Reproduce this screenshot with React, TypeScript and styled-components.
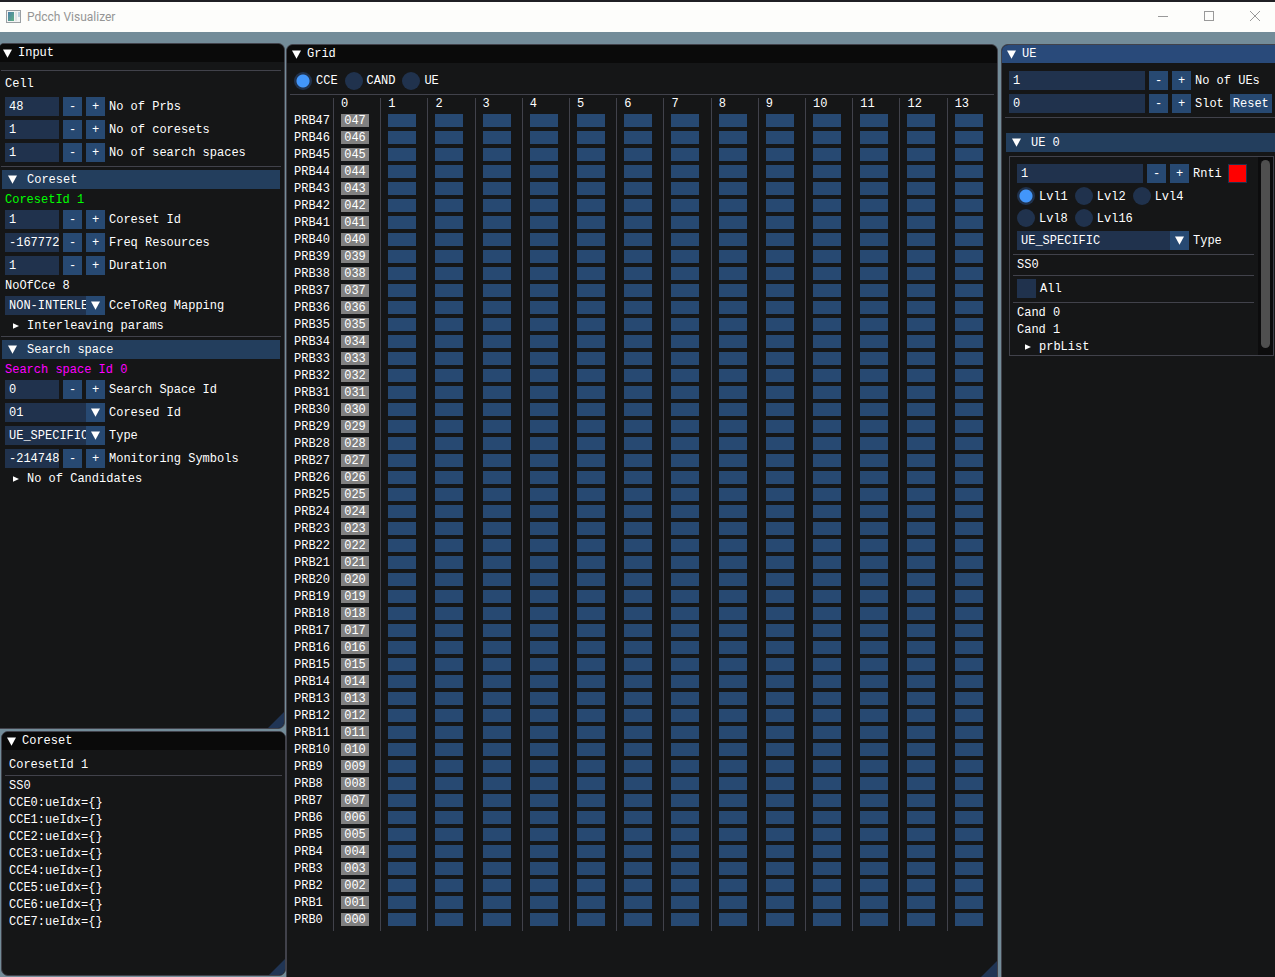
import React, { useState } from "react";
import styled, { createGlobalStyle, css } from "styled-components";

const color = {
  backdrop: "#738c99",
  window: "#151617",
  title: "#0a0a0a",
  titleActive: "#294a7a",
  frame: "#20324d",
  button: "#274972",
  header: "#233e5d",
  line: "#41424b",
  grip: "#203555",
  mark: "#4296fa",
  text: "#ffffff",
};

const GlobalStyle = createGlobalStyle`
  *, *::before, *::after { box-sizing: border-box; }
  body {
    margin: 0;
    background: ${color.backdrop};
    color: ${color.text};
    font: 12px/13px "Liberation Mono", monospace;
  }
  button, input, select { font: inherit; color: inherit; margin: 0; border: 0; border-radius: 0; }
`;

const Screen = styled.div`
  min-height: 100vh;
  display: flex;
  flex-direction: column;
  border-top: 2px solid #1f1f24;
`;

const AppBar = styled.header`
  height: 30px;
  flex: none;
  display: flex;
  align-items: center;
  gap: 6px;
  padding: 0 0 2px 6px;
  background: #fdfdfb;
  color: #959595;
  font: 12px/16px Roboto, "Noto Sans", sans-serif;
`;

const AppTitle = styled.h1`
  flex: 1;
  margin: 0;
  padding-top: 2px;
  font: inherit;
`;

const WindowButton = styled.button`
  width: 40px;
  height: 28px;
  padding: 0;
  display: grid;
  place-items: center;
  background: transparent;
`;

const Desktop = styled.main`
  flex: 1;
  display: flex;
  padding-top: 12px;
`;

const LeftColumn = styled.div`
  flex: 0 0 286px;
  display: flex;
  flex-direction: column;
  gap: 2px;
  margin-top: -1px;
  padding-bottom: 1px;
`;

type Edge = "left" | "right" | "none";

const Panel = styled.section<{ $cut?: Edge; $grow?: boolean }>`
  position: relative;
  display: flex;
  flex-direction: column;
  min-width: 0;
  overflow: hidden;
  background: ${color.window};
  border: 1px solid ${color.line};
  border-radius: 7px;
  ${(p) => p.$grow && css`flex: 1;`}
  ${(p) => p.$cut === "left" && css`border-left: 0; border-radius: 4px 7px 7px 0;`}
  ${(p) => p.$cut === "right" && css`border-right: 0; border-radius: 7px 0 0 0;`}
`;

const InputPanel = styled(Panel)`
  margin-right: 1px;
`;

const CoresetPanel = styled(Panel)`
  margin-left: 1px;
  flex: 0 0 245px;
`;

const GridPanel = styled(Panel)`
  border-bottom: 0;
  border-radius: 7px 7px 0 0;
`;

const UePanel = styled(Panel)`
  flex: 0 0 274px;
  margin-left: 3px;
  border-bottom: 0;
`;

const TitleBar = styled.h2<{ $active?: boolean; $inset?: number }>`
  height: 18px;
  flex: none;
  display: flex;
  align-items: center;
  gap: 6px;
  margin: 0;
  padding-left: ${(p) => p.$inset ?? 5}px;
  font: inherit;
  background: ${(p) => (p.$active ? color.titleActive : color.title)};
`;

const Body = styled.div<{ $left?: number; $right?: number }>`
  display: flex;
  flex-direction: column;
  gap: 4px;
  padding: 8px ${(p) => p.$right ?? 7}px 8px ${(p) => p.$left ?? 7}px;
`;

const Grip = styled.span`
  position: absolute;
  right: 0;
  bottom: 0;
  width: 16px;
  height: 16px;
  background: ${color.grip};
  clip-path: polygon(100% 0, 100% 100%, 0 100%);
`;

const Separator = styled.hr`
  width: auto;
  height: 1px;
  margin: 0 -4px -1px;
  border: 0;
  background: ${color.line};
`;

const Text = styled.p<{ $color?: string; $tall?: boolean }>`
  height: ${(p) => (p.$tall ? 19 : 13)}px;
  margin: 0;
  line-height: ${(p) => (p.$tall ? 21 : 15)}px;
  color: ${(p) => p.$color ?? color.text};
`;

const Caption = styled.span`
  padding-top: 2px;
`;

const FieldLabel = styled.label`
  padding-top: 2px;
`;

const SectionHeader = styled.button<{ $spaced?: boolean }>`
  height: 19px;
  display: flex;
  align-items: center;
  gap: 10px;
  margin: ${(p) => (p.$spaced ? 12 : 0)}px -3px 0;
  padding: 0 6px;
  background: ${color.header};
  text-align: left;
`;

const TreeItem = styled.button`
  height: 13px;
  display: flex;
  align-items: center;
  gap: 8px;
  padding: 0 8px;
  background: transparent;
  line-height: 13px;
`;

const Row = styled.div<{ $height?: number; $gap?: number }>`
  height: ${(p) => p.$height ?? 19}px;
  display: flex;
  align-items: center;
  gap: ${(p) => p.$gap ?? 4}px;
  white-space: nowrap;
`;

const NumberGroup = styled.div<{ $width: number }>`
  flex: none;
  width: ${(p) => p.$width}px;
  display: flex;
  gap: 4px;
`;

const NumberInput = styled.input`
  flex: 1;
  min-width: 0;
  height: 19px;
  padding: 0 0 0 4px;
  background: ${color.frame};
`;

const SquareButton = styled.button`
  flex: none;
  width: 19px;
  height: 19px;
  padding: 2px 0 0;
  background: ${color.button};
  text-align: center;
`;

const TextButton = styled.button`
  height: 19px;
  margin-left: 2px;
  padding: 2px 3px 0;
  background: ${color.button};
`;

const ColorSwatch = styled.button`
  width: 19px;
  height: 19px;
  margin-left: 2px;
  background: #ff0000;
  && { border: 1px solid ${color.frame}; }
`;

const ComboBox = styled.div<{ $width: number }>`
  position: relative;
  flex: none;
  width: ${(p) => p.$width}px;
  height: 19px;
`;

const Select = styled.select`
  appearance: none;
  width: 100%;
  height: 19px;
  padding: 2px 19px 0 4px;
  background: linear-gradient(${color.button}, ${color.button}) right / 19px 100% no-repeat ${color.frame};
`;

const ComboArrow = styled.span`
  position: absolute;
  top: 0;
  right: 0;
  width: 19px;
  height: 19px;
  display: grid;
  place-items: center;
  pointer-events: none;
`;

const ChoiceLabel = styled.label`
  display: flex;
  align-items: center;
  gap: 4px;
`;

const Radio = styled.input`
  appearance: none;
  width: 18px;
  height: 18px;
  && { border-radius: 50%; }
  background: ${color.frame};
  &:checked {
    background: radial-gradient(circle, ${color.mark} 0 6px, ${color.frame} 7px);
  }
`;

const Checkbox = styled.input`
  appearance: none;
  width: 19px;
  height: 19px;
  background: ${color.frame};
  &:checked { background: ${color.mark}; }
`;

const PrbTable = styled.table`
  width: calc(100% + 8px);
  margin: 0 -4px;
  table-layout: fixed;
  border-collapse: separate;
  border-spacing: 0;
`;

const NameCol = styled.col`
  width: 43px;
`;

const SymbolHead = styled.th`
  height: 14px;
  padding: 0 0 0 7px;
  border-left: 1px solid ${color.line};
  font-weight: normal;
  text-align: left;
  vertical-align: top;
`;

const PrbName = styled.th`
  padding: 3px 0 1px 4px;
  font-weight: normal;
  text-align: left;
  vertical-align: top;
`;

const PrbCell = styled.td`
  height: 17px;
  padding: 2px 0 2px 7px;
  border-left: 1px solid ${color.line};
  vertical-align: top;
  tr:last-child > & { height: 20px; }
`;

const ResourceBlock = styled.button<{ $used?: boolean }>`
  display: block;
  width: 28px;
  height: 13px;
  padding: 1px 0 0;
  line-height: 13px;
  text-align: center;
  background: ${(p) => (p.$used ? "#808080" : color.button)};
`;

const Child = styled.div`
  display: flex;
  border: 1px solid ${color.line};
`;

const ChildBody = styled.div`
  flex: 1;
  min-width: 0;
  display: flex;
  flex-direction: column;
  gap: 4px;
  padding: 7px 8px 2px 7px;
`;

const ScrollTrack = styled.div`
  flex: 0 0 15px;
  padding: 3px 3px 7px;
  background: #0c0c0d;
`;

const ScrollThumb = styled.div`
  height: 100%;
  border-radius: 5px;
  background: #4f4f4f;
`;

const Down = () => (
  <svg width="9" height="9" viewBox="0 0 9 9" aria-hidden="true">
    <path d="M0 .5H9L4.5 8.7Z" fill="#fff" />
  </svg>
);

const Right = () => (
  <svg width="6" height="6" viewBox="0 0 6 6" aria-hidden="true">
    <path d="M0 .3L6 3L0 5.7Z" fill="#fff" />
  </svg>
);

interface StepperProps {
  id: string;
  label: string;
  initial: string;
  width?: number;
  children?: React.ReactNode;
}

function Stepper({ id, label, initial, width = 100, children }: StepperProps) {
  const [value, setValue] = useState(initial);
  const step = (by: number) => setValue(String(Number(value) + by));
  return (
    <Row>
      <NumberGroup $width={width}>
        <NumberInput id={id} type="text" value={value} onChange={(e) => setValue(e.target.value)} />
        <SquareButton onClick={() => step(-1)}>-</SquareButton>
        <SquareButton onClick={() => step(1)}>+</SquareButton>
      </NumberGroup>
      <FieldLabel htmlFor={id}>{label}</FieldLabel>
      {children}
    </Row>
  );
}

function Combo({ id, label, value, width = 100 }: { id: string; label: string; value: string; width?: number }) {
  return (
    <Row>
      <ComboBox $width={width}>
        <Select id={id} defaultValue={value}>
          <option>{value}</option>
        </Select>
        <ComboArrow><Down /></ComboArrow>
      </ComboBox>
      <FieldLabel htmlFor={id}>{label}</FieldLabel>
    </Row>
  );
}

function RadioRow({ name, labels, height }: { name: string; labels: string[]; height: number }) {
  return (
    <Row $height={height} $gap={7}>
      {labels.map((label) => (
        <ChoiceLabel key={label}>
          <Radio type="radio" name={name} defaultChecked={label === "CCE" || label === "Lvl1"} />
          <Caption>{label}</Caption>
        </ChoiceLabel>
      ))}
    </Row>
  );
}

const symbols = Array.from({ length: 14 }, (_, i) => i);
const prbs = Array.from({ length: 48 }, (_, i) => 47 - i);
const cces = Array.from({ length: 8 }, (_, i) => i);

function PrbGrid() {
  return (
    <PrbTable>
      <colgroup>
        <NameCol />
        {symbols.map((s) => <col key={s} />)}
      </colgroup>
      <thead>
        <tr>
          <td />
          {symbols.map((s) => <SymbolHead key={s} scope="col">{s}</SymbolHead>)}
        </tr>
      </thead>
      <tbody>
        {prbs.map((prb) => (
          <tr key={prb}>
            <PrbName scope="row">PRB{prb}</PrbName>
            {symbols.map((s) => (
              <PrbCell key={s}>
                <ResourceBlock $used={s === 0}>
                  {s === 0 ? String(prb).padStart(3, "0") : null}
                </ResourceBlock>
              </PrbCell>
            ))}
          </tr>
        ))}
      </tbody>
    </PrbTable>
  );
}

export default function App() {
  return (
    <Screen>
      <GlobalStyle />
      <AppBar>
        <svg width="15" height="13" viewBox="0 0 15 13" aria-hidden="true">
          <defs>
            <linearGradient id="appIcon" x1="0" y1="0" x2="1" y2="1">
              <stop offset="0" stopColor="#4a7fa8" />
              <stop offset="1" stopColor="#5fae84" />
            </linearGradient>
          </defs>
          <rect x=".5" y=".5" width="14" height="12" fill="#f3f4f4" stroke="#9a9fa3" />
          <rect x="2" y="2" width="6" height="9" fill="url(#appIcon)" />
          <rect x="9" y="2" width="2" height="9" fill="#dfe2e4" />
          <rect x="12" y="2" width="2" height="5" fill="#b9cfdd" />
        </svg>
        <AppTitle>Pdcch Visualizer</AppTitle>
        <WindowButton aria-label="Minimize">
          <svg width="10" height="10"><path d="M0 5.5H10" stroke="#999" /></svg>
        </WindowButton>
        <WindowButton aria-label="Maximize">
          <svg width="10" height="10"><rect x=".5" y=".5" width="9" height="9" fill="none" stroke="#999" /></svg>
        </WindowButton>
        <WindowButton aria-label="Close">
          <svg width="10" height="10"><path d="M0 0L10 10M10 0L0 10" stroke="#999" /></svg>
        </WindowButton>
      </AppBar>

      <Desktop>
        <LeftColumn>
          <InputPanel $cut="left" $grow>
            <TitleBar $inset={3}><Down /> Input</TitleBar>
            <Body $left={5}>
              <Separator />
              <Text $tall>Cell</Text>
              <Stepper id="prbs" label="No of Prbs" initial="48" />
              <Stepper id="coresets" label="No of coresets" initial="1" />
              <Stepper id="spaces" label="No of search spaces" initial="1" />
              <Separator />
              <SectionHeader><Down /><Caption>Coreset</Caption></SectionHeader>
              <Text $color="#00ff00">CoresetId 1</Text>
              <Stepper id="coresetId" label="Coreset Id" initial="1" />
              <Stepper id="freq" label="Freq Resources" initial="-167772" />
              <Stepper id="duration" label="Duration" initial="1" />
              <Text>NoOfCce 8</Text>
              <Combo id="mapping" label="CceToReg Mapping" value="NON-INTERLE" />
              <TreeItem><Right /><Caption>Interleaving params</Caption></TreeItem>
              <Separator />
              <SectionHeader><Down /><Caption>Search space</Caption></SectionHeader>
              <Text $color="#ff00ff">Search space Id 0</Text>
              <Stepper id="spaceId" label="Search Space Id" initial="0" />
              <Combo id="spaceCoreset" label="Coresed Id" value="01" />
              <Combo id="spaceType" label="Type" value="UE_SPECIFIC" />
              <Stepper id="monitoring" label="Monitoring Symbols" initial="-214748" />
              <TreeItem><Right /><Caption>No of Candidates</Caption></TreeItem>
            </Body>
            <Grip />
          </InputPanel>

          <CoresetPanel>
            <TitleBar><Down /> Coreset</TitleBar>
            <Body>
              <Text>CoresetId 1</Text>
              <Separator />
              <Text>SS0</Text>
              {cces.map((n) => <Text key={n}>{`CCE${n}:ueIdx={}`}</Text>)}
            </Body>
            <Grip />
          </CoresetPanel>
        </LeftColumn>

        <GridPanel $grow>
          <TitleBar><Down /> Grid</TitleBar>
          <Body>
            <RadioRow name="view" labels={["CCE", "CAND", "UE"]} height={19} />
            <Separator />
            <PrbGrid />
          </Body>
          <Grip />
        </GridPanel>

        <UePanel $cut="right">
          <TitleBar $active><Down /> UE</TitleBar>
          <Body $right={1}>
            <Stepper id="ues" label="No of UEs" initial="1" width={182} />
            <Stepper id="slot" label="Slot" initial="0" width={182}>
              <TextButton>Reset</TextButton>
            </Stepper>
            <Separator />
            <SectionHeader $spaced><Down /><Caption>UE 0</Caption></SectionHeader>
            <Child>
              <ChildBody>
                <Stepper id="rnti" label="Rnti" initial="1" width={172}>
                  <ColorSwatch aria-label="UE color" />
                </Stepper>
                <RadioRow name="level" labels={["Lvl1", "Lvl2", "Lvl4"]} height={18} />
                <RadioRow name="level" labels={["Lvl8", "Lvl16"]} height={18} />
                <Combo id="ueType" label="Type" value="UE_SPECIFIC" width={172} />
                <Separator />
                <Text>SS0</Text>
                <Separator />
                <Row>
                  <ChoiceLabel><Checkbox type="checkbox" /><Caption>All</Caption></ChoiceLabel>
                </Row>
                <Separator />
                <Text>Cand 0</Text>
                <Text>Cand 1</Text>
                <TreeItem><Right /><Caption>prbList</Caption></TreeItem>
              </ChildBody>
              <ScrollTrack><ScrollThumb /></ScrollTrack>
            </Child>
          </Body>
        </UePanel>
      </Desktop>
    </Screen>
  );
}
